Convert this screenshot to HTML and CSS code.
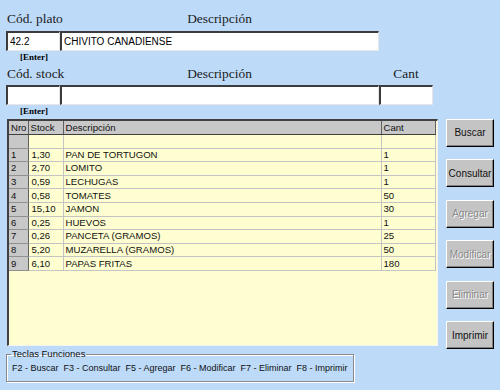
FILE: index.html
```html
<!DOCTYPE html>
<html>
<head>
<meta charset="utf-8">
<link rel="stylesheet" href="styles.css">
</head>
<body>
<div class="app">
  <div class="form">
    <div class="row labels l1">
      <span class="lbl cod">Cód. plato</span>
      <span class="lbl desc">Descripción</span>
    </div>
    <div class="row inputs">
      <div class="field">42.2</div>
      <div class="field">CHIVITO CANADIENSE</div>
    </div>
    <div class="hint">[Enter]</div>
    <div class="row labels l2">
      <span class="lbl cod">Cód. stock</span>
      <span class="lbl desc">Descripción</span>
      <span class="lbl cant">Cant</span>
    </div>
    <div class="row inputs">
      <div class="field"></div>
      <div class="field"></div>
      <div class="field"></div>
    </div>
    <div class="hint">[Enter]</div>
  </div>

  <div class="main">
    <div class="grid">
      <table>
        <colgroup>
          <col class="c-nro"><col class="c-stock"><col class="c-desc"><col class="c-cant">
        </colgroup>
        <thead>
          <tr><th>Nro</th><th>Stock</th><th>Descripción</th><th>Cant</th></tr>
        </thead>
        <tbody>
          <tr><td class="fix"></td><td></td><td></td><td></td></tr>
          <tr><td class="fix">1</td><td>1,30</td><td>PAN DE TORTUGON</td><td>1</td></tr>
          <tr><td class="fix">2</td><td>2,70</td><td>LOMITO</td><td>1</td></tr>
          <tr><td class="fix">3</td><td>0,59</td><td>LECHUGAS</td><td>1</td></tr>
          <tr><td class="fix">4</td><td>0,58</td><td>TOMATES</td><td>50</td></tr>
          <tr><td class="fix">5</td><td>15,10</td><td>JAMON</td><td>30</td></tr>
          <tr><td class="fix">6</td><td>0,25</td><td>HUEVOS</td><td>1</td></tr>
          <tr><td class="fix">7</td><td>0,26</td><td>PANCETA (GRAMOS)</td><td>25</td></tr>
          <tr><td class="fix">8</td><td>5,20</td><td>MUZARELLA (GRAMOS)</td><td>50</td></tr>
          <tr><td class="fix">9</td><td>6,10</td><td>PAPAS FRITAS</td><td>180</td></tr>
        </tbody>
      </table>
    </div>
    <div class="buttons">
      <div class="btn">Buscar</div>
      <div class="btn">Consultar</div>
      <div class="btn disabled">Agregar</div>
      <div class="btn disabled">Modificar</div>
      <div class="btn disabled">Eliminar</div>
      <div class="btn">Imprimir</div>
    </div>
  </div>

  <fieldset class="keys">
    <legend>Teclas Funciones</legend>
    <span>F2 - Buscar</span><span>F3 - Consultar</span><span>F5 - Agregar</span><span>F6 - Modificar</span><span>F7 - Eliminar</span><span>F8 - Imprimir</span>
  </fieldset>
</div>
</body>
</html>
```

FILE: styles.css
```css
html, body {
  margin: 0;
  padding: 0;
}
body {
  width: 500px;
  height: 390px;
  overflow: hidden;
  background: #bddaf9;
  font-family: "Liberation Sans", Arial, sans-serif;
  color: #000;
}
.form {
  padding-left: 6px;
}
.row {
  display: grid;
  grid-template-columns: 54px 319px 54px;
}
.labels {
  font-family: "Liberation Serif", "Times New Roman", serif;
  font-size: 13.4px;
  line-height: 15px;
  color: #1a1a1a;
}
.l1 { padding-top: 11px; }
.l2 { margin-top: 4px; }
.lbl.cod { padding-left: 1px; white-space: nowrap; }
.lbl.desc { text-align: center; }
.lbl.cant { text-align: center; }
.inputs {
  margin-top: 5px;
  height: 20px;
}
.l2 + .inputs { margin-top: 4px; }
.field {
  box-sizing: border-box;
  height: 20px;
  background: #fff;
  border-top: 2px solid #3c3c3c;
  border-left: 2px solid #3c3c3c;
  border-bottom: 1px solid #e6e6e6;
  border-right: 1px solid #e6e6e6;
  font-size: 10px;
  line-height: 17px;
  padding-left: 2px;
  white-space: nowrap;
  overflow: hidden;
}
.hint {
  font-family: "Liberation Serif", "Times New Roman", serif;
  font-weight: bold;
  font-size: 9px;
  line-height: 10px;
  margin-top: 1px;
  padding-left: 14px;
}
.main {
  display: flex;
  margin-top: 3px;
  height: 230px;
}
.grid {
  box-sizing: border-box;
  margin-left: 7px;
  width: 431px;
  height: 227px;
  background: #fefed0;
  border-top: 2px solid #404040;
  border-left: 2px solid #404040;
  border-bottom: 1px solid #f4f4f4;
  border-right: 1px solid #f4f4f4;
  overflow: hidden;
}
.grid table {
  border-collapse: collapse;
  table-layout: fixed;
  width: 426px;
  font-size: 9.6px;
}
.c-nro { width: 19px; }
.c-stock { width: 35px; }
.c-desc { width: 318px; }
.c-cant { width: 54px; }
.grid th, .grid td {
  height: 12.6px;
  padding: 0 0 0 2px;
  line-height: 12px;
  text-align: left;
  font-weight: normal;
  white-space: nowrap;
  overflow: hidden;
}
.grid th {
  height: 13px;
  background: #c8c8c8;
  border-right: 1px solid #606060;
  border-bottom: 1px solid #404040;
  color: #111;
}
.grid td {
  border-right: 1px solid #c4c4c4;
  border-bottom: 1px solid #c4c4c4;
  color: #111;
}
.grid td.fix {
  background: #c8c8c8;
  border-right: 1px solid #606060;
  border-bottom: 1px solid #909090;
}
.grid td:nth-child(2) { padding-left: 3px; }
.grid td:nth-child(3), .grid th:nth-child(3) { padding-left: 2px; }
.buttons {
  margin-left: 8px;
  display: flex;
  flex-direction: column;
  gap: 12.6px;
}
.btn {
  box-sizing: border-box;
  width: 48px;
  height: 28px;
  background: #c4c4c4;
  border-top: 1px solid #fff;
  border-left: 1px solid #fff;
  border-bottom: 1px solid #000;
  border-right: 1px solid #000;
  box-shadow: inset -1px -1px 0 #808080;
  font-size: 10px;
  display: flex;
  align-items: center;
  justify-content: center;
  color: #111;
}
.btn.disabled {
  color: #8a8a8a;
  text-shadow: 1px 1px 0 #fff;
}
.keys {
  box-sizing: border-box;
  margin: 0 0 0 6px;
  width: 346px;
  height: 33px;
  padding: 3px 0 0 5px;
  border: 1px solid #8a8a8a;
  box-shadow: 1px 1px 0 #fff, inset 1px 1px 0 #fff;
  font-size: 9px;
  line-height: 12px;
  color: #111;
  white-space: nowrap;
}
.keys legend {
  padding: 0 1px;
  margin-left: -1px;
  font-size: 9.5px;
  line-height: 10px;
}
.keys span { margin-right: 5px; }
```
